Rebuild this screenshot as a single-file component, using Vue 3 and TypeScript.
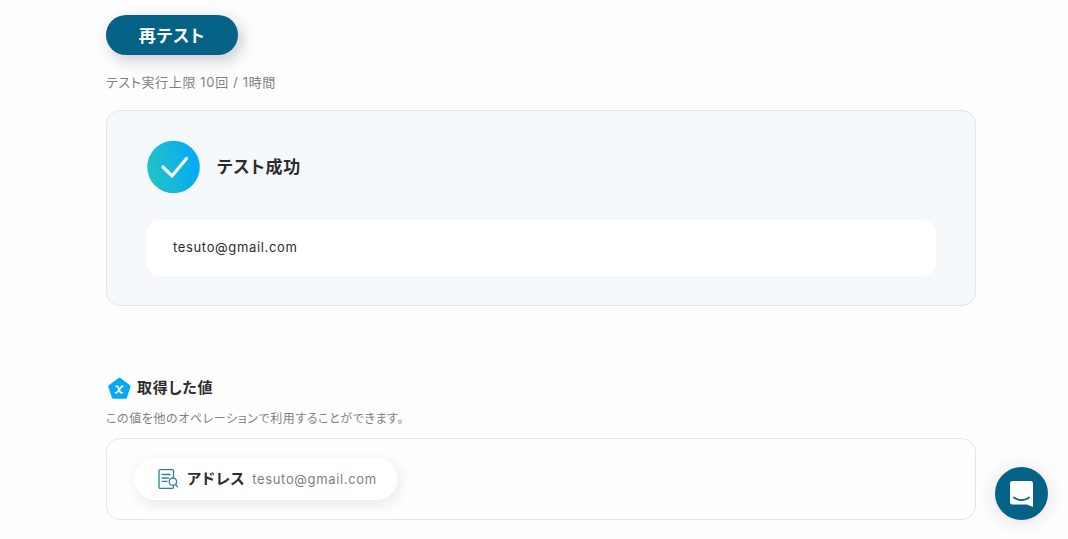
<script setup lang="ts">
const email: string = 'tesuto@gmail.com'
</script>

<template>
  <main class="page">
    <button class="retest" type="button">再テスト</button>
    <p class="limit">テスト実行上限 10回 / 1時間</p>

    <section class="result">
      <header class="result-head">
        <svg class="check" viewBox="0 0 54 54" aria-hidden="true">
          <defs>
            <linearGradient id="check-fill" x1="0" y1="0.6" x2="1" y2="0.4">
              <stop offset="0" stop-color="#22c4c4" />
              <stop offset="1" stop-color="#02a9f7" />
            </linearGradient>
          </defs>
          <circle cx="27.5" cy="27" r="26.3" fill="url(#check-fill)" />
          <path d="M17 27 L26 36 L40.5 18.5" fill="none" stroke="#fff" stroke-width="3.2" stroke-linecap="round" />
        </svg>
        <h2 class="result-title">テスト成功</h2>
      </header>
      <p class="result-value">{{ email }}</p>
    </section>

    <section class="values">
      <h3 class="values-title">
        <svg class="pentagon" viewBox="0 0 24 24" aria-hidden="true">
          <path d="M12.4 3.2 L22.1 10.4 L18.5 21.3 H6.3 L2.7 10.4 Z" fill="#03a9f4" stroke="#03a9f4" stroke-width="3" stroke-linejoin="round" />
          <path d="M9 10.2 H10.6 L13.6 16.8 H15.4 M16 10.2 H15 L9.6 16.8 H8.4" fill="none" stroke="#fff" stroke-width="1.6" stroke-linecap="round" stroke-linejoin="round" />
        </svg>
        取得した値
      </h3>
      <p class="values-note">この値を他のオペレーションで利用することができます。</p>
      <div class="values-box">
        <div class="chip">
          <svg class="doc" viewBox="0 0 20 20" aria-hidden="true">
            <g fill="none" stroke="#2b829e" stroke-width="1.3" stroke-linecap="round" stroke-linejoin="round">
              <path d="M15.5 8 V1.6 Q15.5 0.7 14.6 0.7 H2 Q1 0.7 1 1.6 V18.3 Q1 19.3 2 19.3 H14.6 Q15.5 19.3 15.5 18.3 V17.4" />
              <path d="M4.2 5.5 H12 M4.2 9 H10.5 M4.2 12.4 H9" />
              <circle cx="14.9" cy="12.7" r="3.7" />
              <path d="M17.6 15.4 L19.3 18" />
            </g>
          </svg>
          <span class="chip-name">アドレス</span>
          <span class="chip-value">{{ email }}</span>
        </div>
      </div>
    </section>

    <button class="chat" type="button" aria-label="チャットを開く">
      <svg class="chat-icon" viewBox="0 0 24 28" aria-hidden="true">
        <path d="M2.5 1 H20.5 Q23 1 23 3.5 V27 L17 24.5 H2.5 Q0 24.5 0 22 V3.5 Q0 1 2.5 1 Z" fill="#fff" />
        <path d="M4 17.5 Q11.5 23 19 17.5" fill="none" stroke="#046287" stroke-width="1.8" stroke-linecap="round" />
      </svg>
    </button>
  </main>
</template>

<style>
body {
  margin: 0;
  background: #fefefe;
}
</style>

<style scoped>
.page {
  box-sizing: border-box;
  padding: 15px 92px 19px 106px;
  font-family: Inter, "Noto Sans CJK JP", sans-serif;
  font-feature-settings: "palt";
  font-size: 13px;
  color: #2c2c30;
}
.page * {
  letter-spacing: 0.05em;
}
.retest {
  display: block;
  width: 132px;
  height: 40px;
  padding: 0 0 1px;
  border: 0;
  border-radius: 20px;
  background: #046287;
  box-shadow: 4px 5px 16px rgba(50, 40, 80, 0.26);
  color: #fff;
  font: inherit;
  font-size: 17px;
  font-weight: 700;
  font-feature-settings: inherit;
}
.limit {
  margin: 17px 0 18px;
  font-size: 13px;
  line-height: 20px;
  color: #808086;
}
.result {
  padding: 29px 39px;
  border: 1px solid #e4e5ea;
  border-radius: 14px;
  background: #f5f9fc;
}
.result-head {
  display: flex;
  align-items: center;
  gap: 17px;
}
.check {
  width: 54px;
  height: 54px;
}
.result-title {
  margin: 0;
  font-size: 17px;
  line-height: 28px;
  font-weight: 700;
}
.result-value {
  margin: 26px 0 0;
  padding: 17px 27px 19px;
  border-radius: 14px;
  background: #fff;
  font-size: 13px;
  line-height: 20px;
}
.values {
  margin-top: 70px;
}
.values-title {
  display: flex;
  align-items: center;
  gap: 6px;
  margin: 0;
  font-size: 15px;
  line-height: 24px;
  font-weight: 700;
}
.pentagon {
  width: 24px;
  height: 24px;
  margin-left: 1px;
}
.values-note {
  margin: 9px 0;
  font-size: 12px;
  line-height: 20px;
  color: #808086;
}
.values-box {
  display: flex;
  padding: 19px 27px;
  border: 1px solid #e6e4e8;
  border-radius: 14px;
}
.chip {
  display: flex;
  align-items: center;
  height: 42px;
  padding: 0 21px 0 24px;
  border-radius: 21px;
  background: #fff;
  box-shadow: 2px 4px 14px rgba(50, 30, 80, 0.11);
  line-height: 20px;
}
.doc {
  width: 20px;
  height: 20px;
  margin-right: 9px;
}
.chip-name {
  margin-right: 7px;
  font-size: 15px;
  font-weight: 700;
}
.chip-value {
  font-size: 13px;
  color: #808086;
}
.chat {
  position: fixed;
  right: 20px;
  bottom: 19px;
  display: flex;
  align-items: center;
  justify-content: center;
  width: 53px;
  height: 53px;
  padding: 0;
  border: 0;
  border-radius: 50%;
  background: #046287;
  box-shadow: 0 2px 20px rgba(50, 30, 80, 0.14);
}
.chat-icon {
  width: 24px;
  height: 28px;
}
</style>
